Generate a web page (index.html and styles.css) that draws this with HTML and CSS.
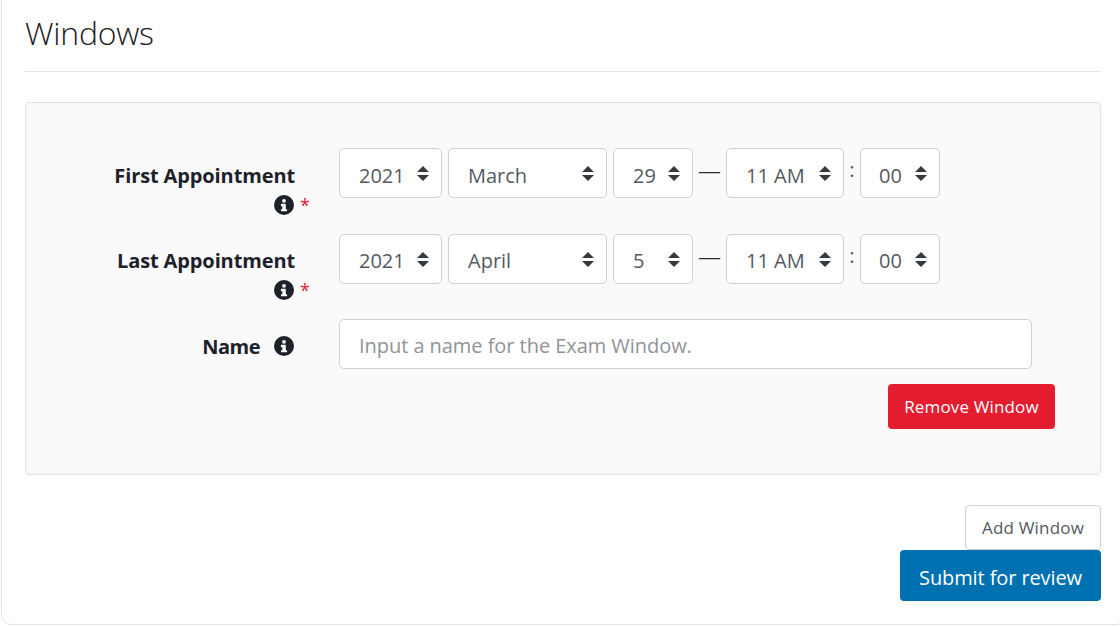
FILE: index.html
```html
<!DOCTYPE html>
<html lang="en">
<head>
<meta charset="utf-8">
<title>Windows</title>
<link rel="stylesheet" href="styles.css">
</head>
<body>
<svg class="defs" width="0" height="0" aria-hidden="true">
  <symbol id="arrows" viewBox="0 0 13 15" preserveAspectRatio="none"><path d="M6.5 0 L13 6 H0 Z M0 9 H13 L6.5 15 Z"/></symbol>
  <symbol id="info" viewBox="0 0 20 20"><path fill-rule="evenodd" d="M10 0a10 10 0 1 0 0 20a10 10 0 0 0 0-20Z M10 3.9a1.9 1.9 0 1 1 0 3.8a1.9 1.9 0 0 1 0-3.8Z M7.4 8.7h3.9a.5.5 0 0 1 .5.5v5.1h.9a.5.5 0 0 1 .4.5v.9a.5.5 0 0 1-.4.5H7.400a.5.5 0 0 1-.5-.5v-.9a.5.5 0 0 1 .5-.5h.9v-3h-.9a.5.5 0 0 1-.5-.5v-1.600a.5.500 0 0 1 .5-.5Z"/></symbol>
</svg>
<main class="card">
  <h2 class="title">Windows</h2>
  <section class="panel">
    <div class="row">
      <div class="label"><span class="label-text">First Appointment</span><span class="label-meta"><svg class="info"><use href="#info"/></svg><span class="req">*</span></span></div>
      <div class="fields">
        <div class="sel w-year"><span>2021</span><svg class="arr"><use href="#arrows"/></svg></div>
        <div class="sel w-month"><span>March</span><svg class="arr"><use href="#arrows"/></svg></div>
        <div class="sel w-day"><span>29</span><svg class="arr"><use href="#arrows"/></svg></div>
        <span class="dash">—</span>
        <div class="sel w-hour"><span>11 AM</span><svg class="arr"><use href="#arrows"/></svg></div>
        <span class="colon">:</span>
        <div class="sel w-min"><span>00</span><svg class="arr"><use href="#arrows"/></svg></div>
      </div>
    </div>
    <div class="row row-last">
      <div class="label"><span class="label-text">Last Appointment</span><span class="label-meta"><svg class="info"><use href="#info"/></svg><span class="req">*</span></span></div>
      <div class="fields">
        <div class="sel w-year"><span>2021</span><svg class="arr"><use href="#arrows"/></svg></div>
        <div class="sel w-month"><span>April</span><svg class="arr"><use href="#arrows"/></svg></div>
        <div class="sel w-day"><span>5</span><svg class="arr"><use href="#arrows"/></svg></div>
        <span class="dash">—</span>
        <div class="sel w-hour"><span>11 AM</span><svg class="arr"><use href="#arrows"/></svg></div>
        <span class="colon">:</span>
        <div class="sel w-min"><span>00</span><svg class="arr"><use href="#arrows"/></svg></div>
      </div>
    </div>
    <div class="row row-name">
      <div class="label label-inline"><span class="label-text">Name</span><svg class="info"><use href="#info"/></svg></div>
      <input class="text-input" type="text" placeholder="Input a name for the Exam Window.">
    </div>
    <div class="panel-actions"><button class="btn btn-danger" type="button">Remove Window</button></div>
  </section>
  <div class="actions">
    <button class="btn btn-add" type="button">Add Window</button>
    <button class="btn btn-primary" type="button">Submit for review</button>
  </div>
</main>
</body>
</html>
```
FILE: styles.css
```css
* { box-sizing: border-box; }
html, body { margin: 0; height: 626px; overflow: hidden; background: #fff; }
body { font-family: "Open Sans", "Noto Sans", "Liberation Sans", sans-serif; color: #212529; }
.defs { position: absolute; }
.card {
  width: 1125px;
  height: 636px;
  margin: -11px 0 0 1px;
  padding: 10px 24px 0 23px;
  border: 1px solid #e4e4ea;
  border-radius: 10px;
}
.title {
  margin: 0;
  height: 72px;
  padding-top: 9px;
  border-bottom: 1px solid #e3e3e6;
  font-size: 32px;
  line-height: 48px;
  font-weight: 300;
  letter-spacing: -0.25px;
  color: #222;
}
.panel {
  margin-top: 30px;
  height: 373px;
  padding: 45px 45px 0 0;
  background: #fafafa;
  border: 1px solid #e3e3e6;
  border-radius: 4px;
  box-shadow: inset 0 0 8px rgba(0, 0, 0, 0.02);
}
.row { display: flex; height: 86px; }
.row-last { height: 85px; }
.row-name { height: 65px; }
.label {
  width: 269px;
  flex: none;
  display: flex;
  flex-direction: column;
  align-items: flex-end;
  font-weight: 700;
  font-size: 20px;
  color: #1d2129;
}
.label-text { line-height: 30px; letter-spacing: -0.12px; margin-top: 13px; }
.row-last .label-text { margin-top: 12px; }
.label-inline .label-text { letter-spacing: -0.5px; }
.label-meta { display: flex; align-items: center; height: 28px; margin-right: -15px; }
.label-inline { flex-direction: row; justify-content: flex-end; align-items: flex-start; }
.label-inline .info { margin: 17px 1px 0 14px; }
.info { width: 20px; height: 20px; fill: #1d2129; display: block; flex: none; }
.req { color: #e41c2f; font-size: 18px; font-weight: 400; width: 16px; text-align: right; line-height: 20px; }
.fields { display: flex; align-items: flex-start; margin-left: 44px; }
.sel {
  position: relative;
  height: 50px;
  margin-right: 6px;
  padding-left: 19px;
  background: #fff;
  border: 1px solid #ced0d2;
  border-radius: 5px;
  font-size: 20px;
  line-height: 53px;
  color: #555a5f;
  flex: none;
}
.row-last .sel { line-height: 51px; }
.arr { position: absolute; right: 12px; top: 17px; width: 12px; height: 15px; fill: #343a40; }
.w-year { width: 103px; }
.w-month { width: 159px; }
.w-day { width: 80px; margin-right: 0; }
.w-hour { width: 118px; margin-right: 0; }
.w-min { width: 80px; margin-right: 0; padding-left: 18px; }
.dash { width: 33px; text-align: center; font-size: 23px; line-height: 44px; color: #2c2c2c; font-weight: 300; }
.colon { width: 16px; text-align: center; font-size: 20px; line-height: 44px; color: #555; }
.text-input {
  margin-left: 44px;
  width: 693px;
  height: 50px;
  padding: 2px 19px 0;
  border: 1px solid #ced0d2;
  border-radius: 5px;
  background: #fff;
  font: 400 20px "Open Sans", "Noto Sans", sans-serif;
  letter-spacing: -0.05px;
  outline: 0;
}
.text-input::placeholder { color: #8f9499; opacity: 1; }
.panel-actions { display: flex; justify-content: flex-end; }
.btn { font-family: inherit; display: block; border-radius: 4px; cursor: pointer; padding: 0; }
.btn-danger { width: 167px; height: 45px; background: #e41c2f; border: 0; color: #fff; font-size: 17px; letter-spacing: 0.15px; padding-bottom: 1px; }
.actions { display: flex; flex-direction: column; align-items: flex-end; margin-top: 30px; }
.btn-add { width: 136px; height: 45px; background: #fff; border: 1px solid #ced0d2; color: #555a5f; font-size: 17px; letter-spacing: 0.18px; }
.btn-primary { width: 201px; height: 51px; background: #0071b0; border: 0; color: #fff; font-size: 20px; letter-spacing: -0.1px; padding-top: 3px; }
```
